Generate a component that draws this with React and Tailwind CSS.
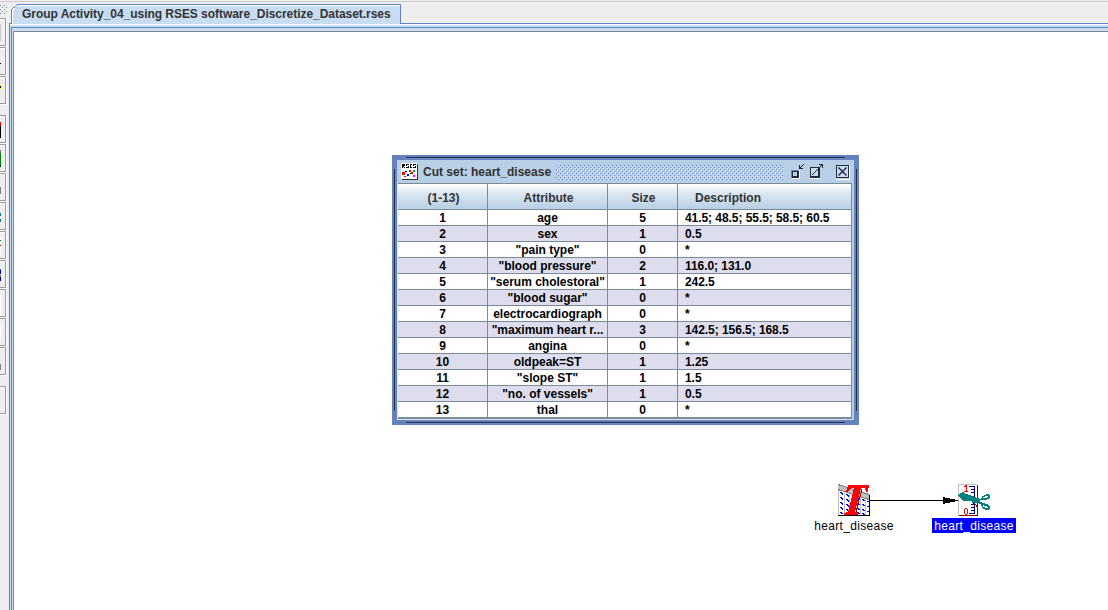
import React from "react";

const rows = [
  ["1", "age", "5", "41.5; 48.5; 55.5; 58.5; 60.5"],
  ["2", "sex", "1", "0.5"],
  ["3", '"pain type"', "0", "*"],
  ["4", '"blood pressure"', "2", "116.0; 131.0"],
  ["5", '"serum cholestoral"', "1", "242.5"],
  ["6", '"blood sugar"', "0", "*"],
  ["7", "electrocardiograph", "0", "*"],
  ["8", '"maximum heart r...', "3", "142.5; 156.5; 168.5"],
  ["9", "angina", "0", "*"],
  ["10", "oldpeak=ST", "1", "1.25"],
  ["11", '"slope ST"', "1", "1.5"],
  ["12", '"no. of vessels"', "1", "0.5"],
  ["13", "thal", "0", "*"],
];

// Each sliver is [x, y, width, height, colour] inside a 5x26 button face.
const tools = [
  { art: [[0, 5, 1, 17, "#c8c8c8"]] },
  { art: [[0, 15, 1, 1, "#000"]] },
  { art: [[0, 8, 1, 1, "#ffff00"], [0, 9, 1, 2, "#000"], [0, 11, 1, 1, "#ffff00"]] },
  { gap: true, art: [[0, 6, 1, 4, "#ff0000"], [0, 10, 1, 12, "#000"]] },
  { art: [[0, 5, 1, 3, "#808080"], [0, 8, 1, 13, "#008000"], [0, 21, 1, 1, "#000"]] },
  { art: [[0, 13, 1, 7, "#808080"]] },
  { art: [[0, 10, 1, 3, "#008080"], [0, 16, 1, 3, "#008080"]] },
  { art: [[0, 5, 1, 17, "#fff"], [0, 8, 1, 1, "#008000"], [0, 13, 1, 1, "#ff0000"]] },
  { art: [[0, 8, 1, 1, "#008080"], [0, 9, 1, 4, "#000080"], [0, 14, 1, 2, "#808080"], [0, 16, 1, 4, "#000080"]] },
  { art: [[0, 5, 1, 21, "#fff"]] },
  { art: [[0, 5, 1, 17, "#fff"]] },
  { art: [[0, 16, 1, 6, "#808080"]] },
  { gap: true, art: [] },
];

function Toolbar() {
  return (
    <aside className="w-[9px] shrink-0 bg-[#eeeeee] overflow-hidden">
      <svg width="9" height="18" shapeRendering="crispEdges" className="block">
        <path d="M0 1.5h9" stroke="#ccc" />
        <path d="M0 5h1v1H0zM4 5h1v1H4zM2 7h1v1H2zM6 7h1v1H6zM0 9h1v1H0zM4 9h1v1H4zM2 11h1v1H2zM6 11h1v1H6zM0 13h1v1H0zM4 13h1v1H4z" fill="#7a8a99" />
      </svg>
      {tools.map((t, i) => (
        <div key={i} className={t.gap ? "pt-[10px]" : ""}>
          <div className="w-[7px] h-[29px] border-r border-b border-white">
            <div className="w-[6px] h-[28px] border-y border-r border-[#999999] shadow-[inset_0_1px_0_#fff]">
              <svg width="5" height="26" shapeRendering="crispEdges" className="block">
                {t.art.map(([x, y, w, h, c], k) => (
                  <rect key={k} x={x} y={y} width={w} height={h} fill={c} />
                ))}
              </svg>
            </div>
          </div>
        </div>
      ))}
    </aside>
  );
}

function TabBar() {
  return (
    <header className="relative h-[24px] shrink-0 flex items-end bg-[#eeeeee]">
      <svg width="1099" height="24" shapeRendering="crispEdges" className="absolute inset-0">
        <path d="M0 1.5H1099" stroke="#cccccc" />
        <path d="M3 24V10L8 4.5H391V24z" fill="#c8ddf2" />
        <path d="M0.5 24V23.5H2.5V10L8.5 4.5H391.5V23.5H1099" fill="none" stroke="#6382bf" />
        <path d="M3.5 23V10L8.5 5.5H391" fill="none" stroke="#fff" />
      </svg>
      <span className="relative pl-[13px] h-[17px] text-[12px] leading-[15px] font-bold text-[#333333] whitespace-nowrap">
        <span className="inline-block tracking-[-0.040px]">Group Activity_04_using RSES software_Discretize_Dataset.rses</span>
      </span>
    </header>
  );
}

function AppIcon() {
  return (
    <svg width="17" height="17" shapeRendering="crispEdges" className="block shrink-0">
      <path d="M0 0h16v16H0z" fill="#fff" />
      <path d="M1 1h3v2H3v1h1v1H3V4H2v1H1zM5 1h3v1H6v1h2v2H5V4h2V3H5zM9 1h2v1h-1v2h1v1H9zM12 1h3v1h-2v1h2v2h-3V4h2V3h-2z" fill="#000" />
      <path d="M1 9h3v3H1zM8 7h2v2H8z" fill="#ff0000" />
      <path d="M4 8h2v1H4zM9 10h1v1H9z" fill="#000" />
      <path d="M12 7h2v2h-2z" fill="#00aa00" />
      <path d="M6 11h2v2H6z" fill="#0000ff" />
      <path d="M3 13h2v1H3zM10 9h2v2h-2z" fill="#ff0000" />
      <path d="M12 12h2v2h-2z" fill="#ff00ff" />
      <path d="M16.5 1V16.5H1" stroke="#333" fill="none" />
    </svg>
  );
}

function TitleBar() {
  return (
    <div className="h-[23px] flex items-center bg-[#b8cfe5] pl-[4px]">
      <AppIcon />
      <span className="w-[138px] shrink-0 pl-[5px] text-[12px] leading-[16px] pt-px font-bold text-[#333333] whitespace-nowrap">Cut set: heart_disease</span>
      <svg width="228" height="15" shapeRendering="crispEdges" className="block shrink-0 mt-px">
        <defs>
          <pattern id="bumps" width="4" height="4" patternUnits="userSpaceOnUse">
            <path d="M0 0h1v1H0zM2 2h1v1H2z" fill="#6382bf" />
            <path d="M1 1h1v1H1zM3 3h1v1H3z" fill="#e6f0fa" />
          </pattern>
        </defs>
        <path d="M0 0h228v15H0z" fill="url(#bumps)" />
      </svg>
      <svg width="70" height="20" shapeRendering="crispEdges" className="block shrink-0">
        <path d="M8 16.500H16M15.500 8V17M26 16.500H36M35.500 5V17M65.500 4V17H52" stroke="#fff" fill="none" />
        <path d="M7 8h8v8H7z" fill="#222b40" />
        <path d="M9 10h4v4H9z" fill="#b8cfe5" />
        <path d="M7 8h8v1H7zM7 8h1v8H7z" fill="#6382bf" />
        <path d="M15 3h1v3h3v1h-4zM16 5h1V4h1V3h1V2h1v1h-1v1h-1v1h-1v1h-1z" fill="#222" />
        <path d="M26.500 5.500H35.500V15.500H26.500z" fill="#c8ddf2" stroke="#222b40" />
        <path d="M27 14.500H35M34.500 6V15" stroke="#222b40" />
        <path d="M35 2h4v4h-1V4h-1v1h-1v1h-1v1h-1v1h-1v1h-1v1h-1v1h-1v1h-1v1h-1v-1h1v-1h1v-1h1V9h1V8h1V7h1V6h1V5h1V4h1V3h-2z" fill="#222" />
        <path d="M52 3h13v13H52z" fill="#c8ddf2" />
        <path d="M52 3h13v13H52zM53 4v11h11V4z" fill="#222b40" fillRule="evenodd" />
        <path d="M54.500 5.500L62.500 13.500M62.500 5.500L54.500 13.500" stroke="#222b40" strokeWidth="1.500" shapeRendering="geometricPrecision" />
      </svg>
    </div>
  );
}

function DataTable() {
  const cols = "grid grid-cols-[90px_120px_70px_174px]";
  return (
    <div className="border-y border-[#7a8a99] text-[12px] font-bold whitespace-nowrap">
      <div className={cols + " h-[26px] text-center leading-[28px] text-[#333333] bg-[linear-gradient(180deg,#fff_0%,#dde8f3_35%,#b8cfe5_100%)] border-b border-[#7a8a99]"}>
        <div className="border-r border-[#7a8a99] pl-[2px]">(1-13)</div>
        <div className="border-r border-[#7a8a99] pl-[2px]">Attribute</div>
        <div className="border-r border-[#7a8a99] pl-[2px]">Size</div>
        <div className="border-r border-[#7a8a99] text-left pl-[17px]">Description</div>
      </div>
      {rows.map((r, i) => (
        <div key={r[0]} className={cols + " h-[16px] leading-[17px] text-center text-black " + (i % 2 ? "bg-[#dddded]" : "bg-white")}>
          <div className="h-[16px] border-r border-b border-[#7a8a99]">{r[0]}</div>
          <div className="h-[16px] border-r border-b border-[#7a8a99]">{r[1]}</div>
          <div className="h-[16px] border-r border-b border-[#7a8a99]">{r[2]}</div>
          <div className="h-[16px] border-r border-b border-[#7a8a99] text-left pl-[7px] tracking-[-0.060px]">{r[3]}</div>
        </div>
      ))}
    </div>
  );
}

function CutSetWindow() {
  return (
    <section className="absolute left-[378px] top-[123px] w-[467px] h-[270px] border-[5px] border-[#6382bf] bg-[#b8cfe5]">
      <TitleBar />
      <div className="border-l border-b border-[#dce6f1] w-[455px]">
        <DataTable />
      </div>
      <svg width="467" height="270" shapeRendering="crispEdges" className="absolute -left-[5px] -top-[5px] pointer-events-none">
        <path d="M14 2.500H453M14 267.500H453M2.500 14V256M464.500 14V256" stroke="#222b40" />
        <path d="M15 3.500H454M15 268.500H454M3.500 15V257M465.500 15V257" stroke="#6f8dc6" />
      </svg>
    </section>
  );
}

function TableIcon() {
  return (
    <svg width="32" height="32" shapeRendering="crispEdges" className="block">
      <path d="M0 3L32 12V32H0z" fill="#fff" />
      <path d="M0.500 3V32M6.500 7V31M11.500 8V31M16.500 10V31M22.500 12V31M27.500 13V31" stroke="#c0c0c0" />
      <path d="M2 8h1v1h1v1h1M2 13h1v1h1v1h1M2 18h1v1h1v1h1M2 23h1v1h1v1h1M2 28h1v1h2M8 10h1v1h1v1h1M8 15h1v1h1v1h1M8 20h1v1h1v1h1M8 25h1v1h1v1h1M19 14h1v1h2M19 19h1v1h2M19 24h1v1h2M19 28h1v1h2M24 15h1v1h2M24 20h1v1h2M24 25h1v1h2M24 29h1v1h2M29 17h2M29 22h2M29 27h2" stroke="#0000ff" fill="none" />
      <path d="M0 0L32 10V16L0 5z" fill="#c0c0c0" />
      <path d="M0 0.500L31 10.500M0 5.500L31 15.500" stroke="#808080" />
      <path d="M10 1H31L30 8H28L27 4H23L17 28L20 29V31H6V29L10 28L16 4H13L10 8H8z" fill="#ff0000" />
      <path d="M24 5L18 28" stroke="#800000" fill="none" />
      <path d="M31.500 11V31.500H0" stroke="#000" fill="none" />
      <path d="M6 30h13v1H6z" fill="#ff0000" />
    </svg>
  );
}

function ScissorsIcon() {
  return (
    <svg width="34" height="32" shapeRendering="crispEdges" className="block overflow-visible">
      <path d="M0 0h20v32H0z" fill="#fff" />
      <path d="M0.500 32V0.500H19" stroke="#c0c0c0" fill="none" />
      <path d="M19.500 1V31.500H1" stroke="#800000" fill="none" />
      <path d="M6 2h1V1h2v6h1v1H6V7h2V3H6zM7 24h2v1h1v5H9v1H7v-1H6v-5h1zM7 25v5h2v-5z" fill="#ff0000" fillRule="evenodd" />
      <path d="M16.500 2V30M11 2.500h6M13 5.500h4M13 8.500h4M13 20.500h4M13 23.500h4M13 26.500h4M11 29.500h6" stroke="#000080" fill="none" />
      <path d="M0 11L5 8L8 10L17 13L22 15L25 13V15L20 18L14 17H6L0 12z" fill="#008080" />
      <path d="M14 16L20 16L25 19V21L20 19H14z" fill="#008080" />
      <path d="M23 14h1v-2h2v-1h2v-1h3v1h1v3h-1v1h-2v1h-5v-1h-1zM25 14h4v-1h1v-1h-3v1h-2zM23 19h4v1h3v1h1v1h1v3h-1v1h-4v-1h-2v-1h-1v-2h-1zM25 21v2h2v1h3v-1h-1v-1h-3v-1z" fill="#008080" fillRule="evenodd" />
      <path d="M15 19h1v1h-1zM16 20h2v1h-2zM18 21h1v2h-1z" fill="#800000" />
    </svg>
  );
}

function Workspace() {
  return (
    <main className="relative flex-1 overflow-hidden bg-white">
      <CutSetWindow />
      <svg width="92" height="9" shapeRendering="crispEdges" className="absolute left-[855px] top-[464px]">
        <path d="M0 4.500H90" stroke="#000" />
        <path d="M74 1v7l14-3v-1z" fill="#000" />
      </svg>
      <div className="absolute left-[799px] top-[452px] w-[82px] flex flex-col items-center text-[12px] text-black whitespace-nowrap">
        <TableIcon />
        <span className="mt-[2px] h-[15px] leading-[17px] tracking-[0.320px]">heart_disease</span>
      </div>
      <div className="absolute left-[918px] top-[452px] w-[84px] flex flex-col text-[12px] text-white whitespace-nowrap">
        <div className="pl-[26px]"><ScissorsIcon /></div>
        <span className="mt-[2px] h-[15px] leading-[17px] bg-[#0000ff] text-center tracking-[0.320px]">heart_disease</span>
      </div>
    </main>
  );
}

export default function App() {
  return (
    <div className="w-[1108px] h-[610px] flex overflow-hidden bg-[#eeeeee] font-['Liberation_Sans',Arial,sans-serif]">
      <Toolbar />
      <div className="flex-1 min-w-0 flex flex-col">
        <TabBar />
        <div className="flex-1 min-h-0 flex flex-col border-l border-[#6382bf] bg-[#c8ddf2] pl-px pt-[3px] shadow-[inset_0_1px_0_#fff]">
          <div className="flex-1 flex flex-col border-l border-t border-[#6382bf] pl-px pt-[3px]">
            <div className="flex-1 flex flex-col border-l border-t border-[#7a8a99]">
              <Workspace />
            </div>
          </div>
        </div>
      </div>
    </div>
  );
}
